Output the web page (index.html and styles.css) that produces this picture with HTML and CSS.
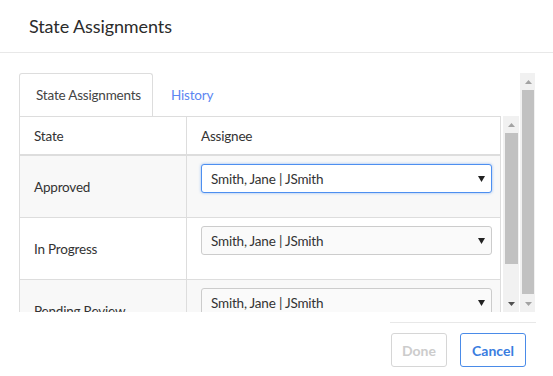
FILE: index.html
```html
<!DOCTYPE html>
<html lang="en">
<head>
    <meta charset="UTF-8">
    <meta name="viewport" content="width=device-width, initial-scale=1.0">
    <title>State Assignments</title>
    <link rel="stylesheet" href="styles.css">
</head>
<body>
    <div class="modal">
        <div class="modal-header">
            <h1>State Assignments</h1>
        </div>
        <div class="modal-body">
            <div class="body-main">
                <ul class="tabs">
                    <li class="tab active">State Assignments</li>
                    <li class="tab"><a href="#">History</a></li>
                </ul>
                <div class="table-area">
                    <div class="table-clip">
                        <table class="grid">
                            <thead>
                                <tr>
                                    <th class="col-state">State</th>
                                    <th>Assignee</th>
                                </tr>
                            </thead>
                            <tbody>
                                <tr>
                                    <td>Approved</td>
                                    <td class="cell-select">
                                        <div class="select focused">
                                            <span>Smith, Jane | JSmith</span>
                                            <svg width="7" height="6" viewBox="0 0 7 6"><path d="M0 0h7L3.5 6z" fill="#222"/></svg>
                                        </div>
                                    </td>
                                </tr>
                                <tr>
                                    <td>In Progress</td>
                                    <td class="cell-select">
                                        <div class="select">
                                            <span>Smith, Jane | JSmith</span>
                                            <svg width="7" height="6" viewBox="0 0 7 6"><path d="M0 0h7L3.5 6z" fill="#222"/></svg>
                                        </div>
                                    </td>
                                </tr>
                                <tr>
                                    <td>Pending Review</td>
                                    <td class="cell-select">
                                        <div class="select">
                                            <span>Smith, Jane | JSmith</span>
                                            <svg width="7" height="6" viewBox="0 0 7 6"><path d="M0 0h7L3.5 6z" fill="#222"/></svg>
                                        </div>
                                    </td>
                                </tr>
                            </tbody>
                        </table>
                    </div>
                    <div class="vscroll inner">
                        <div class="vscroll-btn"><svg width="7" height="4" viewBox="0 0 7 4"><path d="M0 4h7L3.5 0z" fill="#a3a3a3"/></svg></div>
                        <div class="vscroll-track"><div class="vscroll-thumb"></div></div>
                        <div class="vscroll-btn"><svg width="7" height="4" viewBox="0 0 7 4"><path d="M0 0h7L3.5 4z" fill="#505050"/></svg></div>
                    </div>
                </div>
            </div>
            <div class="vscroll outer">
                <div class="vscroll-btn"><svg width="7" height="4" viewBox="0 0 7 4"><path d="M0 4h7L3.5 0z" fill="#a3a3a3"/></svg></div>
                <div class="vscroll-track"><div class="vscroll-thumb"></div></div>
                <div class="vscroll-btn"><svg width="7" height="4" viewBox="0 0 7 4"><path d="M0 0h7L3.5 4z" fill="#a3a3a3"/></svg></div>
            </div>
        </div>
        <div class="modal-footer">
            <div class="actions">
                <button class="btn btn-done" disabled>Done</button>
                <button class="btn btn-cancel">Cancel</button>
            </div>
        </div>
    </div>
</body>
</html>
```

FILE: styles.css
```css
body, html {
    margin: 0;
    padding: 0;
    background: #ffffff;
    color: #333333;
    font-family: Lato, "Open Sans", sans-serif;
    font-size: 13.5px;
    letter-spacing: -0.2px;
}
.modal-header {
    height: 52px;
    border-bottom: 1px solid #e8e8e8;
    padding: 0 29px;
    display: flex;
    align-items: center;
}
.modal-header h1 {
    margin: 0;
    font-size: 18px;
    font-weight: 400;
    letter-spacing: -0.1px;
    color: #2b2b2b;
}
.modal-body {
    display: flex;
    margin: 20px 18px 0 19px;
    height: 239px;
    overflow: hidden;
}
.body-main {
    width: 500px;
}
.tabs {
    list-style: none;
    margin: 0;
    padding: 0;
    display: flex;
    height: 43px;
}
.tab {
    display: flex;
    align-items: center;
    padding: 0 17px;
    height: 42px;
    white-space: nowrap;
    border: 1px solid transparent;
    border-bottom: none;
}
.tab.active {
    box-sizing: border-box;
    width: 134px;
    height: 43px;
    padding: 0 0 0 16px;
    border-color: #dddddd;
    border-radius: 3px 3px 0 0;
    background: #ffffff;
    color: #444444;
}
.tab a {
    color: #5b86f2;
    text-decoration: none;
}
.table-area {
    display: flex;
    height: 196px;
}
.table-clip {
    width: 483px;
    overflow: hidden;
}
.grid {
    width: 482px;
    border-collapse: collapse;
}
.grid th, .grid td {
    border: 1px solid #dddddd;
    text-align: left;
    font-weight: 400;
    padding: 0 14px;
}
.grid th {
    height: 37px;
    border-bottom: 2px solid #dddddd;
}
.grid .col-state {
    width: 138px;
}
.grid td {
    height: 61px;
}
.grid td.cell-select {
    vertical-align: top;
    padding: 0 8px 0 14px;
}
.grid tbody tr:nth-child(odd) {
    background: #f8f8f8;
}
.select {
    margin-top: 8px;
    height: 27px;
    display: flex;
    align-items: center;
    justify-content: space-between;
    padding: 0 6px 0 9px;
    border: 1px solid #cccccc;
    border-radius: 3px;
    background: #fafafa;
    color: #333333;
}
.select.focused {
    border-color: #4d8ff0;
    background: #ffffff;
    box-shadow: 0 0 3px rgba(77, 143, 240, 0.6);
}
.vscroll {
    width: 16px;
    display: flex;
    flex-direction: column;
    background: #f1f1f1;
}
.vscroll.inner {
    margin-left: 1px;
}
.vscroll.outer {
    margin-left: 1px;
}
.vscroll-btn {
    height: 17px;
    display: flex;
    align-items: center;
    justify-content: center;
    padding-left: 1px;
}
.vscroll-track {
    flex: 1;
    padding: 0 1px 0 2px;
}
.vscroll-thumb {
    background: #c1c1c1;
}
.inner .vscroll-thumb {
    height: 131px;
}
.outer .vscroll-thumb {
    height: 204px;
}
.modal-footer {
    display: flex;
    justify-content: flex-end;
    padding: 10px 17px 0 0;
}
.actions {
    display: flex;
    gap: 13px;
    border-top: 1px solid #e8e8e8;
    padding: 10px 10px 0 1px;
}
.btn {
    box-sizing: border-box;
    height: 34px;
    padding: 0;
    border: 1px solid #4a8be8;
    border-radius: 3px;
    background: #ffffff;
    color: #3a7de0;
    font-family: Lato, "Open Sans", sans-serif;
    font-size: 14px;
    font-weight: 700;
}
.btn-done {
    width: 56px;
}
.btn-cancel {
    width: 66px;
}
.btn:disabled {
    border-color: #d6d6d6;
    color: #cccccc;
}
```
